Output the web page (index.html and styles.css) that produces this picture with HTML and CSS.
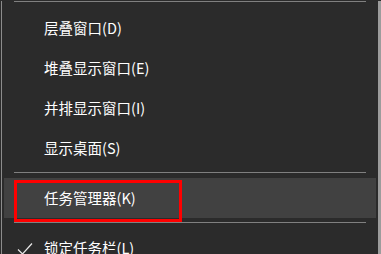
FILE: index.html
```html
<!DOCTYPE html>
<html lang="zh-CN">
<head>
  <meta charset="UTF-8">
  <title>任务栏菜单</title>
  <link rel="stylesheet" href="styles.css">
</head>
<body>
  <div class="menu">
    <div class="sep sep-top"></div>
    <div class="item">层叠窗口(D)</div>
    <div class="item">堆叠显示窗口(E)</div>
    <div class="item">并排显示窗口(I)</div>
    <div class="item">显示桌面(S)</div>
    <div class="sep"></div>
    <div class="item active">
      任务管理器(K)
      <span class="mark"></span>
    </div>
    <div class="sep"></div>
    <div class="item checked">
      <svg class="check" width="16" height="14" viewBox="0 0 16 14">
        <path d="M1 7.5 L5.5 12 L15 1.5" fill="none" stroke="#e8e8e8" stroke-width="1.2"/>
      </svg>
      锁定任务栏(L)
    </div>
  </div>
</body>
</html>
```
FILE: styles.css
```css
* { margin: 0; padding: 0; box-sizing: border-box; }
html, body { height: 100%; overflow: hidden; }
body {
  background: #2b2b2b;
  font-family: "Noto Sans CJK SC", "Noto Sans", sans-serif;
  color: #fff;
}

/* CONTEXT MENU */
.menu {
  height: 100%;
  margin-left: 1px;
  border-left: 1px solid #8c8c8c;
  border-right: 3px solid #9c9c9c;
  padding: 0 2px;
  background: #2b2b2b;
}
.sep { height: 1px; background: #808080; margin: 4px 10px 5px 10px; }
.sep-top { margin-top: 1px; margin-bottom: 6px; }

.item {
  position: relative;
  height: 40px; line-height: 40px;
  padding-left: 40px;
  font-size: 14.5px;
  white-space: nowrap;
}
.item.active { background: #414141; }

.check { position: absolute; left: 13px; top: 14px; }

/* red annotation box */
.mark {
  position: absolute; left: 10px; top: 2px;
  width: 168px; height: 42px;
  border: 3px solid #ff0000;
}
```
